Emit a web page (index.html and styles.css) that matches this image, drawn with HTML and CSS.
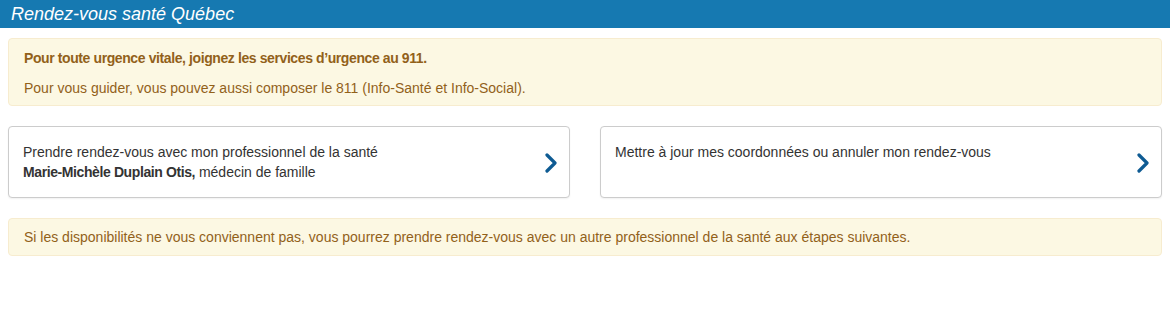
FILE: index.html
```html
<!DOCTYPE html>
<html lang="fr">
<head>
    <meta charset="UTF-8">
    <meta name="viewport" content="width=device-width, initial-scale=1.0">
    <title>Rendez-vous santé Québec</title>
    <link rel="stylesheet" href="styles.css">
</head>
<body>
    <header class="topbar">
        <span class="brand">Rendez-vous santé Québec</span>
    </header>
    <main class="page">
        <div class="alert">
            <p><strong>Pour toute urgence vitale, joignez les services d’urgence au 911.</strong></p>
            <p>Pour vous guider, vous pouvez aussi composer le 811 (Info-Santé et Info-Social).</p>
        </div>

        <div class="choices">
            <a class="choice" href="#">
                <span class="choice-text">
                    Prendre rendez-vous avec mon professionnel de la santé<br>
                    <strong>Marie-Michèle Duplain Otis,</strong> médecin de famille
                </span>
                <svg class="chevron" viewBox="0 0 12 20" width="12" height="20" aria-hidden="true">
                    <path d="M2 2 L10 10 L2 18" fill="none" stroke="currentColor" stroke-width="3.2" stroke-linecap="round" stroke-linejoin="round"/>
                </svg>
            </a>
            <a class="choice" href="#">
                <span class="choice-text">
                    Mettre à jour mes coordonnées ou annuler mon rendez-vous
                </span>
                <svg class="chevron" viewBox="0 0 12 20" width="12" height="20" aria-hidden="true">
                    <path d="M2 2 L10 10 L2 18" fill="none" stroke="currentColor" stroke-width="3.2" stroke-linecap="round" stroke-linejoin="round"/>
                </svg>
            </a>
        </div>

        <div class="alert alert-small">
            Si les disponibilités ne vous conviennent pas, vous pourrez prendre rendez-vous avec un autre professionnel de la santé aux étapes suivantes.
        </div>
    </main>
</body>
</html>
```

FILE: styles.css
```css
:root {
    --text-color: #333333;
    --brand-color: #1679b1;
    --warn-bg: #fcf8e3;
    --warn-border: #f7eccf;
    --warn-text: #92611a;
    --card-border: #cccccc;
    --chevron-color: #0e5b93;
}

body {
    margin: 0;
    font-family: "Liberation Sans", Arial, sans-serif;
    font-size: 14px;
    line-height: 20px;
    color: var(--text-color);
    background: #ffffff;
}

strong {
    letter-spacing: -0.4px;
}

.topbar {
    width: 1170px;
    height: 28px;
    background: var(--brand-color);
    display: flex;
    align-items: center;
    padding: 0 11px;
    box-sizing: border-box;
}

.brand {
    color: #ffffff;
    font-style: italic;
    font-size: 18px;
    line-height: 22px;
}

.page {
    width: 1154px;
    margin-left: 8px;
    padding-top: 10px;
}

.alert {
    background: var(--warn-bg);
    border: 1px solid var(--warn-border);
    border-radius: 4px;
    color: var(--warn-text);
    padding: 9px 15px 7px;
    margin-bottom: 20px;
}

.alert p {
    margin: 0 0 10px;
}

.alert p:last-child {
    margin-bottom: 0;
}

.alert-small {
    padding: 8px 15px;
}

.choices {
    display: grid;
    grid-template-columns: 1fr 1fr;
    gap: 30px;
    margin-bottom: 20px;
}

.choice {
    display: flex;
    align-items: center;
    justify-content: space-between;
    min-height: 40px;
    padding: 15px 12px 15px 14px;
    border: 1px solid var(--card-border);
    border-radius: 4px;
    box-shadow: 0 1px 2px rgba(0, 0, 0, 0.06);
    color: var(--text-color);
    text-decoration: none;
    background: #ffffff;
}

.choice-text {
    align-self: flex-start;
}

.chevron {
    flex-shrink: 0;
    color: var(--chevron-color);
    margin-top: 2px;
}
```
